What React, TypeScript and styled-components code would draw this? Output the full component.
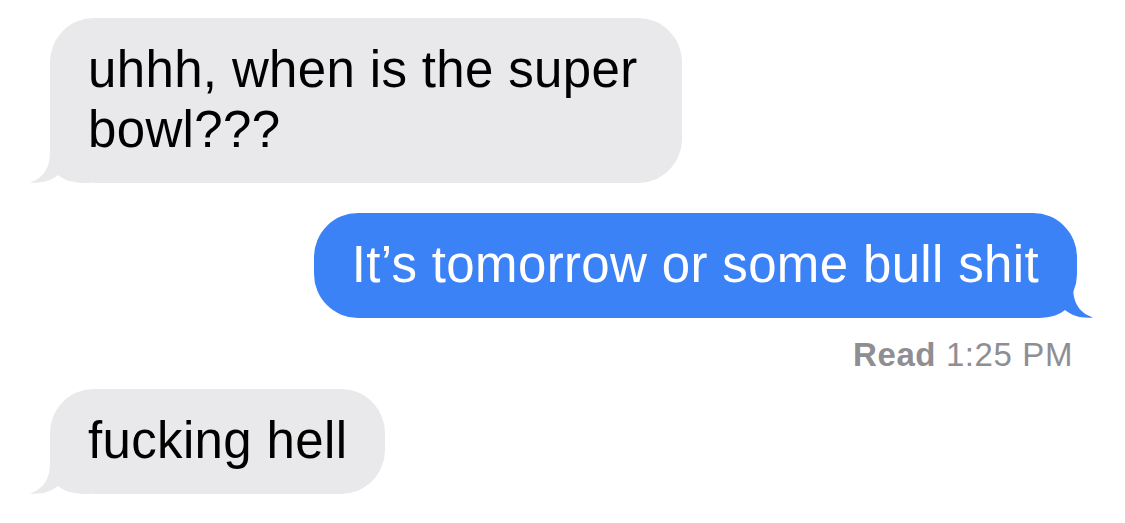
import styled, { createGlobalStyle } from "styled-components";

const GlobalStyle = createGlobalStyle`
  html, body {
    margin: 0;
    padding: 0;
    background: #ffffff;
    overflow: hidden;
  }
  body {
    font-family: "Liberation Sans", Arial, Helvetica, sans-serif;
    -webkit-font-smoothing: antialiased;
  }
`;

const GRAY = "#e9e9eb";
const BLUE = "#3b82f6";

type Side = "in" | "out";

const Thread = styled.main`
  width: 1125px;
  height: 523px;
  box-sizing: border-box;
  padding: 18px 48px 0 50px;
  display: flex;
  flex-direction: column;
`;

const Row = styled.div<{ $side: Side; $gap: number }>`
  display: flex;
  justify-content: ${(p) => (p.$side === "out" ? "flex-end" : "flex-start")};
  margin-top: ${(p) => p.$gap}px;
`;

const Bubble = styled.div<{ $side: Side }>`
  position: relative;
  box-sizing: border-box;
  max-width: ${(p) => (p.$side === "out" ? "800px" : "632px")};
  padding: 22px 38px 23px 38px;
  border-radius: 44px;
  background: ${(p) => (p.$side === "out" ? BLUE : GRAY)};
  color: ${(p) => (p.$side === "out" ? "#ffffff" : "#000000")};
  font-size: 51px;
  line-height: 60px;
  letter-spacing: 0.35px;
  white-space: ${(p) => (p.$side === "out" ? "nowrap" : "normal")};
`;

const BubbleText = styled.span`
  position: relative;
`;

const TailSvg = styled.svg<{ $side: Side }>`
  position: absolute;
  bottom: 0;
  width: 60px;
  height: 44px;
  ${(p) =>
    p.$side === "out"
      ? "right: -16px; transform: scaleX(-1);"
      : "left: -20px;"}
`;

const Tail = ({ side }: { side: Side }) => (
  <TailSvg $side={side} viewBox="0 0 60 44" aria-hidden>
    <path
      d="M20 0 L20 12 C20 30 13 39 0 43.5 C11 44.5 21 42 28 36 C36 42.5 46 44 60 44 L60 0 Z"
      fill={side === "out" ? BLUE : GRAY}
    />
  </TailSvg>
);

const Receipt = styled.div`
  margin-top: 17px;
  padding-right: 4px;
  text-align: right;
  color: #8e8e93;
  font-size: 33px;
  line-height: 40px;
  letter-spacing: 0.6px;
`;

const ReceiptLabel = styled.span`
  font-weight: 700;
`;

type Message = { side: Side; text: string; gap: number };

const before: Message[] = [
  { side: "in", text: "uhhh, when is the super bowl???", gap: 0 },
  { side: "out", text: "It\u2019s tomorrow or some bull shit", gap: 30 },
];

export default function App() {
  return (
    <>
      <GlobalStyle />
      <Thread>
        {before.map((m) => (
          <Row key={m.text} $side={m.side} $gap={m.gap}>
            <Bubble $side={m.side}>
              <Tail side={m.side} />
              <BubbleText>{m.text}</BubbleText>
            </Bubble>
          </Row>
        ))}
        <Receipt>
          <ReceiptLabel>Read</ReceiptLabel> 1:25 PM
        </Receipt>
        <Row $side="in" $gap={14}>
          <Bubble $side="in">
            <Tail side="in" />
            <BubbleText>fucking hell</BubbleText>
          </Bubble>
        </Row>
      </Thread>
    </>
  );
}
